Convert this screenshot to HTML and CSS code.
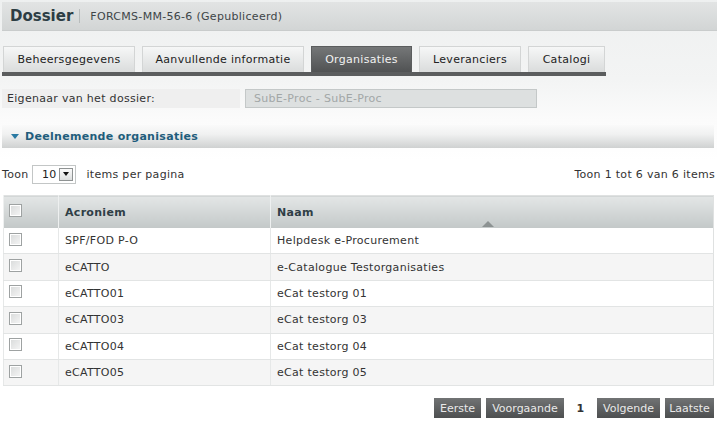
FILE: index.html
```html
<!DOCTYPE html>
<html lang="nl">
<head>
<meta charset="utf-8">
<title>Dossier</title>
<link rel="stylesheet" href="styles.css">
</head>
<body>
<div class="page">
  <div class="header">
    <span class="title">Dossier</span>
    <span class="sep"></span>
    <span class="subtitle">FORCMS-MM-56-6 (Gepubliceerd)</span>
  </div>

  <div class="tabs">
    <div class="tab t1">Beheersgegevens</div>
    <div class="tab t2">Aanvullende informatie</div>
    <div class="tab t3 active">Organisaties</div>
    <div class="tab t4">Leveranciers</div>
    <div class="tab t5">Catalogi</div>
  </div>

  <div class="field">
    <div class="label">Eigenaar van het dossier:</div>
    <div class="input">SubE-Proc - SubE-Proc</div>
  </div>

  <div class="section">
    <span class="caret"></span>
    <span>Deelnemende organisaties</span>
  </div>

  <div class="toolbar">
    <div class="perpage">
      <span>Toon</span>
      <span class="select"><span class="val">10</span><span class="btn"><span class="tri"></span></span></span>
      <span>items per pagina</span>
    </div>
    <div class="count">Toon 1 tot 6 van 6 items</div>
  </div>

  <table class="grid">
    <thead>
      <tr>
        <th class="c0"><span class="cb"></span></th>
        <th class="c1">Acroniem</th>
        <th class="c2">Naam<span class="sort"></span></th>
      </tr>
    </thead>
    <tbody>
      <tr><td class="c0"><span class="cb"></span></td><td>SPF/FOD P-O</td><td>Helpdesk e-Procurement</td></tr>
      <tr class="alt"><td class="c0"><span class="cb"></span></td><td>eCATTO</td><td>e-Catalogue Testorganisaties</td></tr>
      <tr><td class="c0"><span class="cb"></span></td><td>eCATTO01</td><td>eCat testorg 01</td></tr>
      <tr class="alt"><td class="c0"><span class="cb"></span></td><td>eCATTO03</td><td>eCat testorg 03</td></tr>
      <tr><td class="c0"><span class="cb"></span></td><td>eCATTO04</td><td>eCat testorg 04</td></tr>
      <tr class="alt"><td class="c0"><span class="cb"></span></td><td>eCATTO05</td><td>eCat testorg 05</td></tr>
    </tbody>
  </table>

  <div class="pager">
    <span class="pbtn p1">Eerste</span>
    <span class="pbtn p2">Voorgaande</span>
    <span class="cur">1</span>
    <span class="pbtn p3">Volgende</span>
    <span class="pbtn p4">Laatste</span>
  </div>
</div>
</body>
</html>
```

FILE: styles.css
```css
html, body {
  margin: 0;
  padding: 0;
}
body {
  font-family: "DejaVu Sans", Verdana, sans-serif;
  font-size: 11px;
  letter-spacing: 0.3px;
  color: #333;
  background: linear-gradient(#eef0f0 0px, #f3f4f4 80px, #fbfbfb 120px, #ffffff 160px);
  width: 717px;
  height: 425px;
  overflow: hidden;
}
.page {
  padding: 2px 0 0 2px;
}

/* header */
.header {
  height: 29px;
  display: flex;
  align-items: center;
  background: linear-gradient(#e2e4e4, #d2d5d5);
  border-bottom: 1px solid #c9cccc;
  box-sizing: border-box;
}
.title {
  font-weight: bold;
  font-size: 15px;
  letter-spacing: 0;
  color: #2d3d44;
  margin-left: 8px;
}
.sep {
  width: 1px;
  height: 14px;
  background: #b8bcbc;
  margin: 0 10px 0 6px;
}
.subtitle {
  color: #3e4548;
  font-size: 11px;
}

/* tabs */
.tabs {
  display: inline-flex;
  gap: 7px;
  margin-top: 15px;
  border-bottom: 4px solid #5b5d5e;
  padding: 0 1px;
}
.tab {
  height: 26px;
  box-sizing: border-box;
  display: flex;
  align-items: center;
  justify-content: center;
  background: linear-gradient(#f6f7f7, #dadcdc);
  border: 1px solid #d3d5d5;
  border-bottom: none;
  color: #222;
}
.t1 { width: 132px; }
.t2 { width: 162px; }
.t3 { width: 101px; }
.t4 { width: 102px; }
.t5 { width: 77px; }
.tab.active {
  background: linear-gradient(#757778, #505253);
  border-color: #5b5d5e;
  color: #f2f2f2;
}

/* field */
.field {
  display: flex;
  gap: 5px;
  margin-top: 13px;
  height: 19px;
}
.label {
  width: 238px;
  background: #efefef;
  display: flex;
  align-items: center;
  padding-left: 5px;
  box-sizing: border-box;
  color: #333;
}
.input {
  width: 292px;
  box-sizing: border-box;
  border: 1px solid #c4c8c8;
  background: #dde0e0;
  color: #a2a7a7;
  display: flex;
  align-items: center;
  padding-left: 8px;
}

/* section */
.section {
  margin-top: 17px;
  height: 23px;
  width: 712px;
  display: flex;
  align-items: center;
  background: linear-gradient(#fafafa, #f0f1f1 40%, #cfd1d1);
  font-weight: bold;
  font-size: 11px;
  color: #1f5d7c;
}
.caret {
  width: 0;
  height: 0;
  border-left: 4px solid transparent;
  border-right: 4px solid transparent;
  border-top: 5px solid #2a7aa3;
  margin: 0 6px 0 9px;
}

/* toolbar */
.toolbar {
  display: flex;
  justify-content: space-between;
  align-items: center;
  margin-top: 16px;
  width: 713px;
  height: 20px;
}
.perpage {
  display: flex;
  align-items: center;
}
.select {
  display: inline-flex;
  align-items: center;
  width: 44px;
  height: 19px;
  box-sizing: border-box;
  border: 1px solid #c3c6c6;
  background: #fff;
  margin: 0 10px 0 4px;
}
.select .val {
  flex: 1;
  text-align: right;
  padding-right: 3px;
  color: #222;
}
.select .btn {
  width: 14px;
  height: 13px;
  box-sizing: border-box;
  border: 1px solid #8f9393;
  background: linear-gradient(#fbfbfb, #dcdede);
  margin-right: 2px;
  display: flex;
  align-items: center;
  justify-content: center;
}
.tri {
  width: 0;
  height: 0;
  border-left: 3.5px solid transparent;
  border-right: 3.5px solid transparent;
  border-top: 4px solid #111;
}
.count {
  color: #333;
}

/* grid */
.grid {
  margin-top: 11px;
  margin-left: 1px;
  width: 711px;
  border-collapse: collapse;
  border: 1px solid #dfe1e1;
}
.grid th {
  height: 32px;
  text-align: left;
  font-weight: bold;
  color: #2f3e46;
  background: linear-gradient(#e3e6e6, #c3c8c8);
  border-left: 1px solid #eef0f0;
  padding: 0 0 0 6px;
  position: relative;
}
.grid td {
  height: 25.4px;
  border-bottom: 1px solid #e2e4e4;
  border-left: 1px solid #e6e8e8;
  padding: 0 0 0 6px;
  color: #333;
}
.grid .c0 {
  width: 49px;
  padding-left: 5px;
  vertical-align: middle;
}
.grid .c1 {
  width: 205px;
}
.grid tbody tr td {
  background: #fff;
}
.grid tbody tr.alt td {
  background: #f5f5f5;
}
.cb {
  display: block;
  width: 11px;
  height: 11px;
  border: 1px solid #9ea2a2;
  background: linear-gradient(135deg, #d8dada, #f6f6f6);
  box-shadow: inset 0 0 0 1px #fff;
  margin-top: -4px;
}
.grid td .cb {
  margin-top: -3px;
}
.sort {
  position: absolute;
  left: 211px;
  bottom: 1px;
  width: 0;
  height: 0;
  border-left: 6px solid transparent;
  border-right: 6px solid transparent;
  border-bottom: 6px solid #8c9292;
}

/* pager */
.pager {
  display: flex;
  justify-content: flex-end;
  align-items: center;
  gap: 5px;
  margin-top: 12px;
  width: 712px;
}
.pbtn {
  height: 20px;
  display: flex;
  align-items: center;
  justify-content: center;
  letter-spacing: 0;
  background: linear-gradient(#717374, #4d4f50);
  color: #e9e9e9;
}
.p1 { width: 47px; }
.p2 { width: 78px; }
.p3 { width: 63px; }
.p4 { width: 49px; }
.cur {
  font-weight: bold;
  color: #333;
  width: 23px;
  text-align: center;
}
```
